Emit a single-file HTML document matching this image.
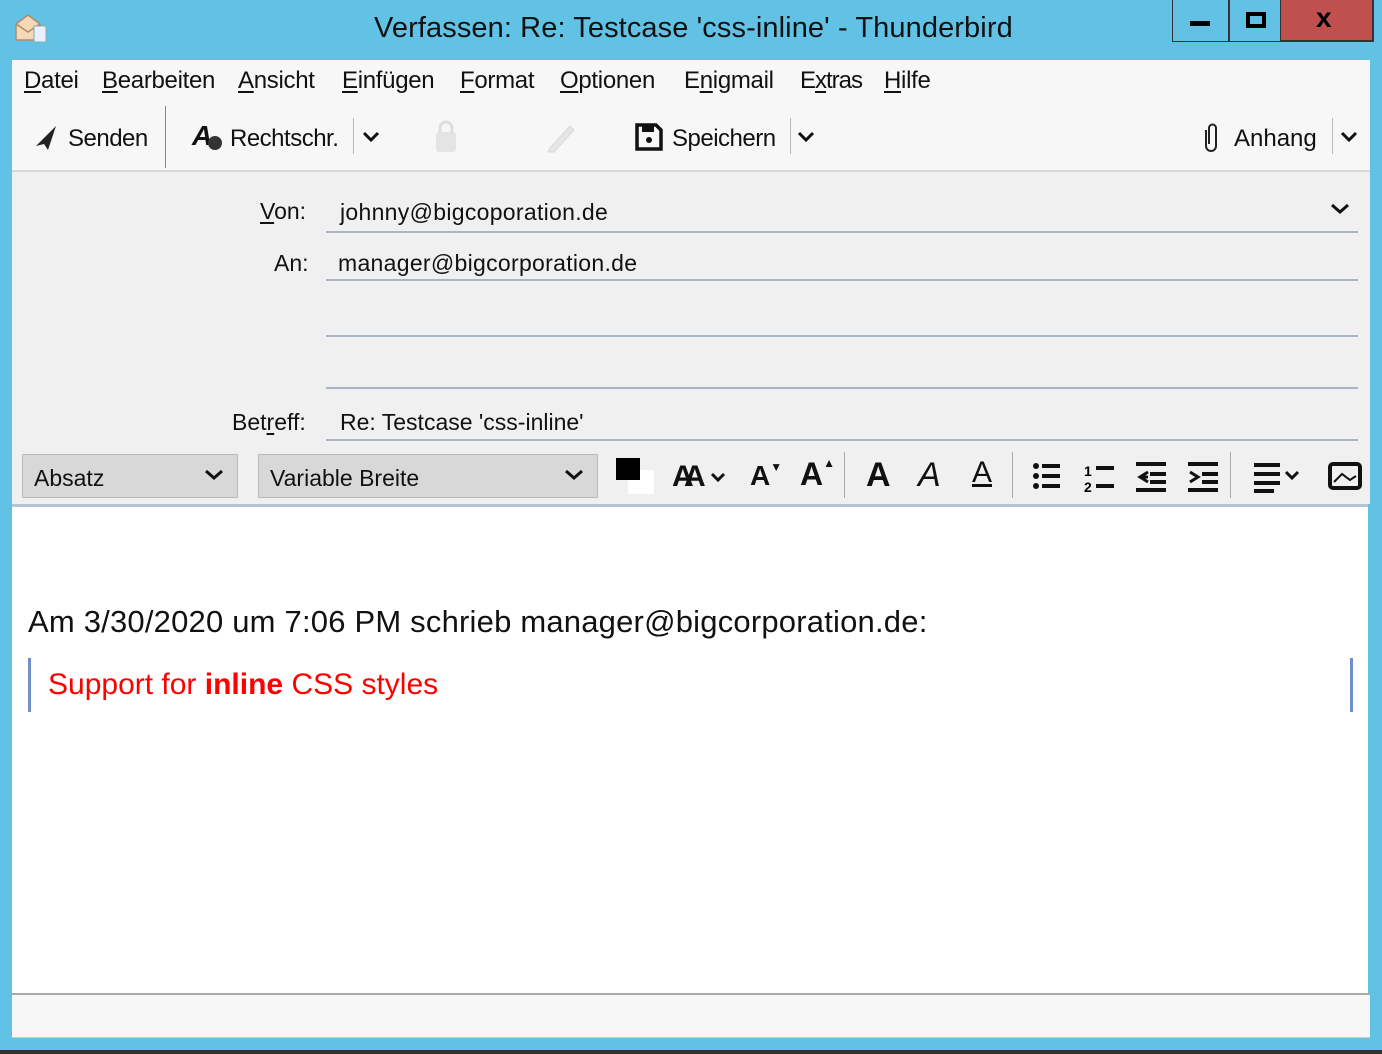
<!DOCTYPE html>
<html><head><meta charset="utf-8"><style>
*{margin:0;padding:0;box-sizing:border-box}
body{width:1382px;height:1054px;background:#62c2e5;position:relative;overflow:hidden;font-family:"Liberation Sans",sans-serif;color:#111}
.a{position:absolute;white-space:nowrap}
u{text-decoration:underline;text-underline-offset:3px}
.line{position:absolute;left:326px;width:1032px;height:2px;background:#aab4c8}
.sep{position:absolute;width:1px;background:#999}
.ic{position:absolute;font-weight:bold;font-size:32px}
</style></head><body>
<svg class="a" style="left:14px;top:12px" width="36" height="32"><path d="M2 12 L14 3 L26 12 V28 H2 Z" fill="#f3d9b8" stroke="#b08a66" stroke-width="1.5"/><path d="M2 12 L14 20 L26 12" fill="none" stroke="#b08a66" stroke-width="1.5"/><rect x="20" y="14" width="12" height="16" fill="#e8f0ff" stroke="#8aa" /></svg>
<div class="a" style="left:374px;top:12px;font-size:29px;letter-spacing:0.1px;color:#111">Verfassen: Re: Testcase 'css-inline' - Thunderbird</div>
<div class="a" style="left:1172px;top:0;width:202px;height:42px;border:1.5px solid #333;border-top:none;background:#62c2e5"></div>
<div class="a" style="left:1228px;top:0;width:1.5px;height:42px;background:#333"></div>
<div class="a" style="left:1280px;top:0;width:93px;height:41px;background:#c0504d;border-left:1.5px solid #333;border-right:1.5px solid #333;border-bottom:1.5px solid #333"></div>
<div class="a" style="left:1190px;top:21px;width:20px;height:5px;background:#000"></div>
<div class="a" style="left:1246px;top:12px;width:20px;height:16px;border:4px solid #000"></div>
<div class="a" style="left:1316px;top:2px;font-size:28px;font-weight:bold;color:#000">x</div>
<div class="a" style="left:12px;top:60px;width:1358px;height:978px;background:#f0f0f0"></div>
<div class="a" style="left:12px;top:60px;width:1358px;height:112px;background:#f7f7f7;border-bottom:2px solid #d8d8d8"></div>
<div class="a" style="left:24px;top:67px;font-size:24px;letter-spacing:-0.3px">
<span style="position:absolute;left:0"><u>D</u>atei</span><span style="position:absolute;left:78px"><u>B</u>earbeiten</span><span style="position:absolute;left:214px"><u>A</u>nsicht</span><span style="position:absolute;left:318px"><u>E</u>infügen</span><span style="position:absolute;left:436px"><u>F</u>ormat</span><span style="position:absolute;left:536px"><u>O</u>ptionen</span><span style="position:absolute;left:660px">E<u>n</u>igmail</span><span style="position:absolute;left:776px;letter-spacing:-1px">E<u>x</u>tras</span><span style="position:absolute;left:860px"><u>H</u>ilfe</span></div>
<svg class="a" style="left:34px;top:124px" width="26" height="28"><path d="M22 2 L2 22 L10 20 L14 26 Z" fill="#222"/></svg>
<div class="a" style="left:68px;top:125px;font-size:24px;letter-spacing:-0.5px">Senden</div>
<div class="sep" style="left:165px;top:106px;height:62px;background:#888"></div>
<div class="a" style="left:192px;top:120px;font-size:28px;font-style:italic;font-weight:bold">A</div>
<div class="a" style="left:208px;top:136px;width:14px;height:14px;border-radius:7px;background:#333"></div>
<div class="a" style="left:230px;top:125px;font-size:24px;letter-spacing:-0.5px">Rechtschr.</div>
<div class="sep" style="left:353px;top:118px;height:36px;background:#bbb"></div>
<svg class="a" style="left:362px;top:130px" width="18" height="14"><path d="M2 3 L9 10 L16 3" fill="none" stroke="#111" stroke-width="3"/></svg>
<svg class="a" style="left:432px;top:120px" width="28" height="34"><rect x="4" y="12" width="20" height="20" rx="3" fill="#e4e4e4"/><path d="M8 13 V8 a6 6 0 0 1 12 0 V13" fill="none" stroke="#ddd" stroke-width="3"/></svg>
<svg class="a" style="left:544px;top:120px" width="34" height="34"><path d="M6 28 L26 6 L30 10 L10 32 L4 32 Z" fill="#e6e6e6" stroke="#d8d8d8"/></svg>
<svg class="a" style="left:634px;top:122px" width="30" height="30"><path d="M3 3 H22 L27 8 V27 H3 Z" fill="none" stroke="#111" stroke-width="3.5"/><rect x="8" y="3" width="12" height="7" fill="#111"/><circle cx="15" cy="18" r="3" fill="#111"/></svg>
<div class="a" style="left:672px;top:125px;font-size:24px;letter-spacing:-0.5px">Speichern</div>
<div class="sep" style="left:790px;top:118px;height:36px;background:#bbb"></div>
<svg class="a" style="left:797px;top:130px" width="18" height="14"><path d="M2 3 L9 10 L16 3" fill="none" stroke="#111" stroke-width="3"/></svg>
<svg class="a" style="left:1200px;top:120px" width="22" height="34"><path d="M6 10 V26 a5 5 0 0 0 10 0 V8 a3.5 3.5 0 0 0 -7 0 V24" fill="none" stroke="#222" stroke-width="2"/></svg>
<div class="a" style="left:1234px;top:125px;font-size:24px">Anhang</div>
<div class="sep" style="left:1332px;top:118px;height:36px;background:#bbb"></div>
<svg class="a" style="left:1340px;top:130px" width="18" height="14"><path d="M2 3 L9 10 L16 3" fill="none" stroke="#111" stroke-width="3"/></svg>
<div class="a" style="left:260px;top:198px;font-size:23px"><u>V</u>on:</div>
<div class="a" style="left:340px;top:199px;font-size:23px;letter-spacing:0.3px">johnny@bigcoporation.de</div>
<svg class="a" style="left:1330px;top:202px" width="20" height="14"><path d="M2 3 L10 10 L18 3" fill="none" stroke="#111" stroke-width="3"/></svg>
<div class="line" style="top:231px"></div>
<div class="a" style="left:274px;top:250px;font-size:23px">An:</div>
<div class="a" style="left:338px;top:250px;font-size:23px;letter-spacing:0.3px">manager@bigcorporation.de</div>
<div class="line" style="top:279px"></div>
<div class="line" style="top:335px"></div>
<div class="line" style="top:387px"></div>
<div class="a" style="left:232px;top:409px;font-size:23px">Bet<u>r</u>eff:</div>
<div class="a" style="left:340px;top:409px;font-size:23px">Re: Testcase 'css-inline'</div>
<div class="line" style="top:439px"></div>
<div class="a" style="left:22px;top:454px;width:216px;height:44px;background:#d8d8d8;border:1px solid #bbb"></div>
<div class="a" style="left:34px;top:465px;font-size:23px">Absatz</div>
<svg class="a" style="left:204px;top:468px" width="20" height="14"><path d="M2 3 L10 10 L18 3" fill="none" stroke="#111" stroke-width="3"/></svg>
<div class="a" style="left:258px;top:454px;width:340px;height:44px;background:#d8d8d8;border:1px solid #bbb"></div>
<div class="a" style="left:270px;top:465px;font-size:23px">Variable Breite</div>
<svg class="a" style="left:564px;top:468px" width="20" height="14"><path d="M2 3 L10 10 L18 3" fill="none" stroke="#111" stroke-width="3"/></svg>
<div class="a" style="left:628px;top:470px;width:26px;height:24px;background:#fff"></div>
<div class="a" style="left:616px;top:458px;width:24px;height:22px;background:#000"></div>
<div class="ic" style="left:672px;top:460px;font-size:30px">A</div>
<div class="ic" style="left:684px;top:460px;font-size:30px">A</div>
<svg class="a" style="left:710px;top:472px" width="16" height="12"><path d="M2 2 L8 8 L14 2" fill="none" stroke="#111" stroke-width="3"/></svg>
<div class="ic" style="left:750px;top:460px;font-size:28px">A<span style="font-size:12px;vertical-align:top">▼</span></div>
<div class="ic" style="left:800px;top:456px;font-size:32px">A<span style="font-size:12px;vertical-align:top">▲</span></div>
<div class="sep" style="left:844px;top:452px;height:46px;background:#aaa"></div>
<div class="ic" style="left:866px;top:456px;font-size:34px">A</div>
<div class="ic" style="left:918px;top:456px;font-size:34px;font-style:italic;font-weight:normal">A</div>
<div class="ic" style="left:972px;top:456px;font-size:30px;font-weight:normal;text-decoration:underline">A</div>
<div class="sep" style="left:1012px;top:452px;height:46px;background:#aaa"></div>
<svg class="a" style="left:1030px;top:460px" width="200" height="34">
<g fill="#111"><circle cx="6" cy="6" r="3"/><circle cx="6" cy="16" r="3"/><circle cx="6" cy="26" r="3"/><rect x="12" y="4" width="18" height="4"/><rect x="12" y="14" width="18" height="4"/><rect x="12" y="24" width="18" height="4"/>
<rect x="66" y="6" width="18" height="4"/><rect x="66" y="24" width="18" height="4"/>
<rect x="106" y="2" width="30" height="4"/><rect x="120" y="12" width="16" height="4"/><rect x="120" y="20" width="16" height="4"/><rect x="106" y="28" width="30" height="4"/>
<rect x="158" y="2" width="30" height="4"/><rect x="172" y="12" width="16" height="4"/><rect x="172" y="20" width="16" height="4"/><rect x="158" y="28" width="30" height="4"/></g>
<text x="54" y="16" font-size="14" font-weight="bold" font-family="Liberation Sans">1</text><text x="54" y="32" font-size="14" font-weight="bold" font-family="Liberation Sans">2</text>
<path d="M118 12 L110 17 L118 22 M110 17 H118" stroke="#111" stroke-width="3" fill="none"/><path d="M160 12 L168 17 L160 22" stroke="#111" stroke-width="3" fill="none"/>
</svg>
<div class="sep" style="left:1230px;top:452px;height:46px;background:#aaa"></div>
<svg class="a" style="left:1252px;top:460px" width="130" height="34"><g fill="#111"><rect x="2" y="3" width="26" height="4"/><rect x="2" y="12" width="26" height="4"/><rect x="2" y="21" width="26" height="4"/><rect x="2" y="29" width="20" height="4"/></g><path d="M34 12 L40 18 L46 12" stroke="#111" stroke-width="3" fill="none"/><rect x="78" y="4" width="30" height="24" rx="3" fill="none" stroke="#111" stroke-width="4"/><path d="M82 22 L90 14 L98 20 L104 16" stroke="#111" stroke-width="2" fill="none"/></svg>
<div class="a" style="left:12px;top:504px;width:1358px;height:3px;background:#b6c4d8"></div>
<div class="a" style="left:12px;top:507px;width:1358px;height:486px;background:#fff"></div>
<div class="a" style="left:1368px;top:504px;width:14px;height:536px;background:#62c2e5"></div>
<div class="a" style="left:28px;top:604px;font-size:31px;letter-spacing:0.2px;color:#111">Am 3/30/2020 um 7:06 PM schrieb manager@bigcorporation.de:</div>
<div class="a" style="left:28px;top:658px;width:3px;height:54px;background:#6f8fc8"></div>
<div class="a" style="left:1350px;top:658px;width:3px;height:54px;background:#6f8fc8"></div>
<div class="a" style="left:48px;top:668px;font-size:30px;color:#ff0000">Support for <b>inline</b> CSS styles</div>
<div class="a" style="left:12px;top:993px;width:1358px;height:2px;background:#aaa"></div>
<div class="a" style="left:12px;top:995px;width:1358px;height:43px;background:#f7f7f7;border-bottom:1px solid #ccc"></div>
<div class="a" style="left:0;top:1050px;width:1382px;height:4px;background:#333"></div>
</body></html>
